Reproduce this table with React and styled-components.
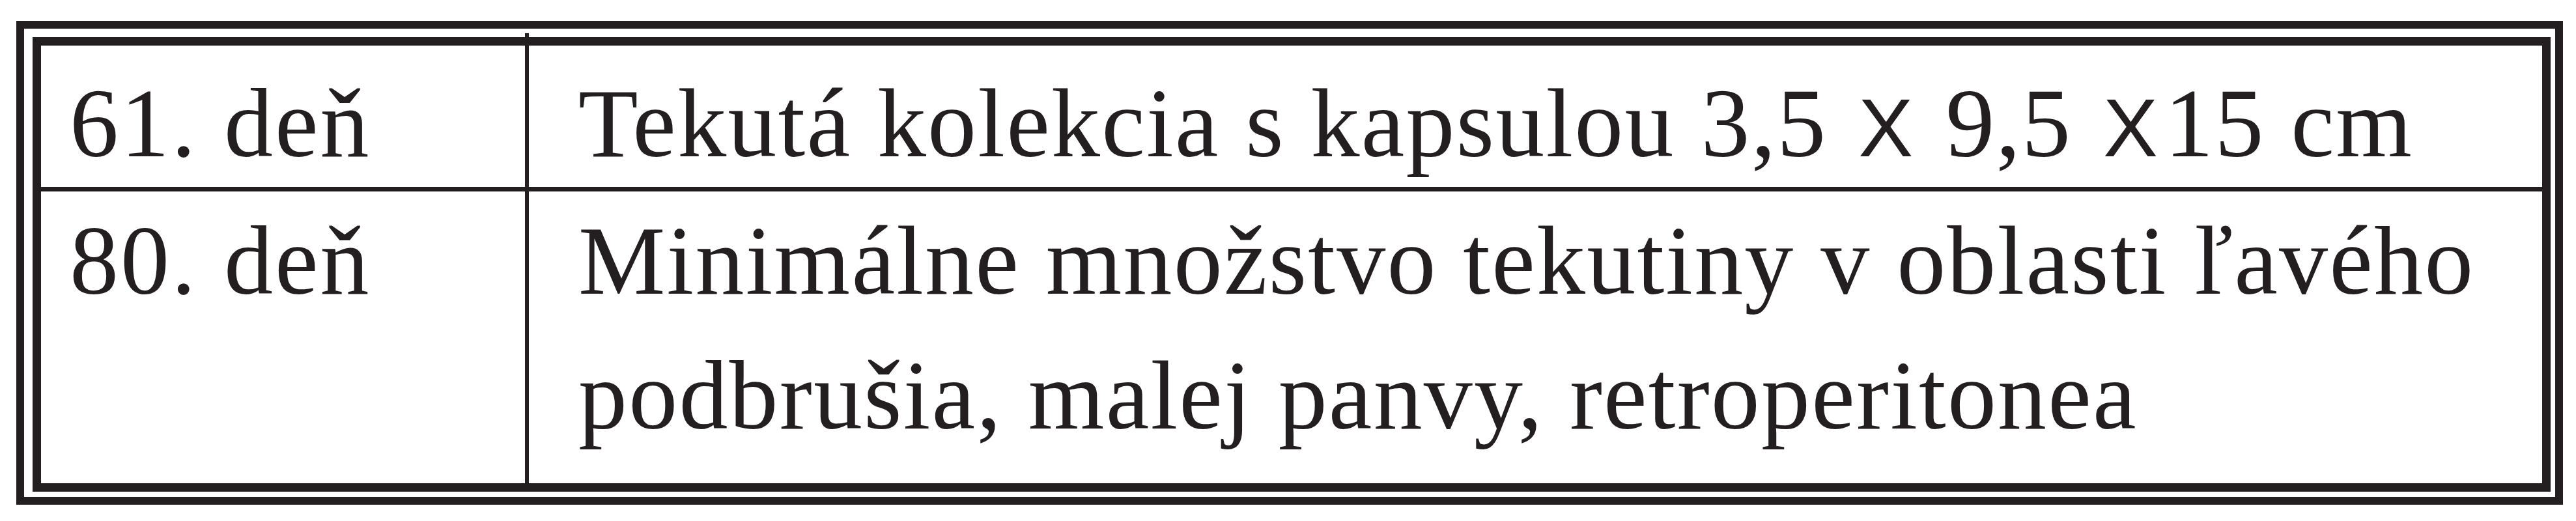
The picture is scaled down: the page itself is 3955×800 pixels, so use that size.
import styled, { createGlobalStyle } from "styled-components";

const GlobalStyle = createGlobalStyle`
  body {
    margin: 0;
    background: #ffffff;
  }
`;

const Page = styled.div`
  padding: 32px 0 0 25px;
  font-family: "Liberation Serif", "Times New Roman", serif;
  color: #231f20;
`;

const Frame = styled.div`
  width: 3910px;
  box-sizing: border-box;
  border: 12px solid #231f20;
  padding: 13px 7px 8px 13px;
`;

const Table = styled.div`
  display: grid;
  grid-template-columns: 749px 1fr;
  grid-template-rows: 224px 448px;
  border: 13px solid #231f20;
`;

const Cell = styled.div`
  position: relative;
  box-sizing: border-box;
  padding: ${(p) => (p.$top ? "16px" : "3px")} 0 0
    ${(p) => (p.$first ? "44px" : "76px")};
  border-right: ${(p) => (p.$first ? "6px solid #231f20" : "none")};
  border-bottom: ${(p) => (p.$top ? "7px solid #231f20" : "none")};
  font-size: 150px;
  line-height: 207px;
  letter-spacing: ${(p) => (p.$first ? "3px" : "2.2px")};
  white-space: nowrap;

  ${(p) =>
    p.$first &&
    p.$top &&
    `
    &::before {
      content: "";
      position: absolute;
      top: -19px;
      right: -6px;
      width: 6px;
      height: 19px;
      background: #231f20;
    }
  `}
`;

const Times = styled.span`
  font-family: "Liberation Sans", Arial, sans-serif;
  font-size: 126px;
  margin: 0 8px;
`;

const rows = [
  {
    day: "61. deň",
    text: (
      <>
        Tekutá kolekcia s kapsulou 3,5 <Times>X</Times> 9,5 <Times>X</Times>15 cm
      </>
    ),
  },
  {
    day: "80. deň",
    text: (
      <>
        Minimálne množstvo tekutiny v oblasti ľavého
        <br />
        podbrušia, malej panvy, retroperitonea
      </>
    ),
  },
];

export default function App() {
  return (
    <>
      <GlobalStyle />
      <Page>
        <Frame>
          <Table>
            {rows.map((row, i) => (
              <>
                <Cell key={"d" + i} $first $top={i === 0}>
                  {row.day}
                </Cell>
                <Cell key={"t" + i} $top={i === 0}>
                  {row.text}
                </Cell>
              </>
            ))}
          </Table>
        </Frame>
      </Page>
    </>
  );
}
